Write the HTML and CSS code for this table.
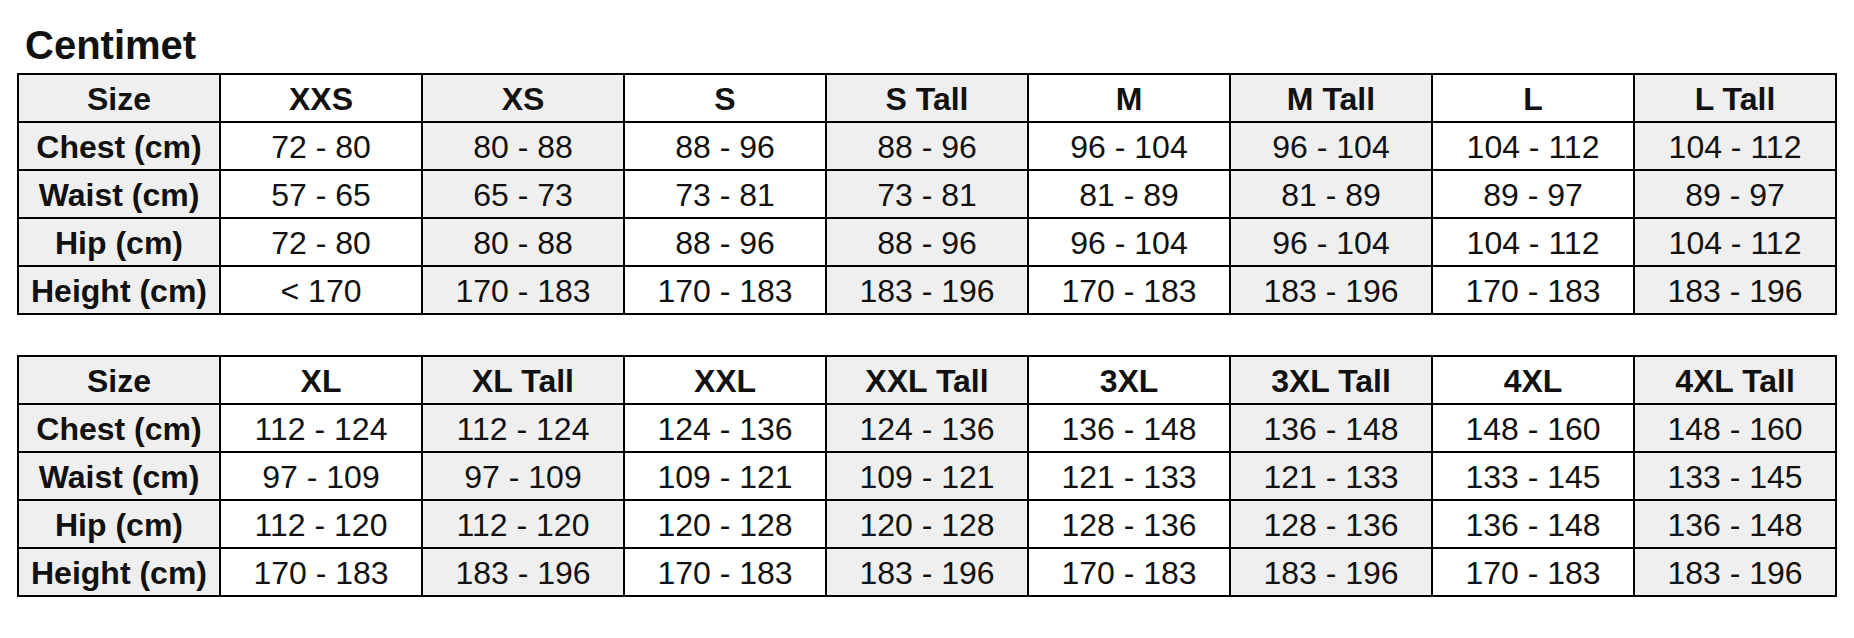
FILE: index.html
```html
<!DOCTYPE html>
<html lang="en">
<head>
<meta charset="utf-8">
<title>Size chart</title>
<link rel="stylesheet" href="styles.css">
</head>
<body>
<div class="page">
  <h1 class="title">Centimet</h1>
  <div class="chart">
    <div class="cell head shade">Size</div>
    <div class="cell head">XXS</div>
    <div class="cell head shade">XS</div>
    <div class="cell head">S</div>
    <div class="cell head shade">S Tall</div>
    <div class="cell head">M</div>
    <div class="cell head shade">M Tall</div>
    <div class="cell head">L</div>
    <div class="cell head shade">L Tall</div>

    <div class="cell head shade">Chest (cm)</div>
    <div class="cell">72 - 80</div>
    <div class="cell shade">80 - 88</div>
    <div class="cell">88 - 96</div>
    <div class="cell shade">88 - 96</div>
    <div class="cell">96 - 104</div>
    <div class="cell shade">96 - 104</div>
    <div class="cell">104 - 112</div>
    <div class="cell shade">104 - 112</div>

    <div class="cell head shade">Waist (cm)</div>
    <div class="cell">57 - 65</div>
    <div class="cell shade">65 - 73</div>
    <div class="cell">73 - 81</div>
    <div class="cell shade">73 - 81</div>
    <div class="cell">81 - 89</div>
    <div class="cell shade">81 - 89</div>
    <div class="cell">89 - 97</div>
    <div class="cell shade">89 - 97</div>

    <div class="cell head shade">Hip (cm)</div>
    <div class="cell">72 - 80</div>
    <div class="cell shade">80 - 88</div>
    <div class="cell">88 - 96</div>
    <div class="cell shade">88 - 96</div>
    <div class="cell">96 - 104</div>
    <div class="cell shade">96 - 104</div>
    <div class="cell">104 - 112</div>
    <div class="cell shade">104 - 112</div>

    <div class="cell head shade">Height (cm)</div>
    <div class="cell">&lt; 170</div>
    <div class="cell shade">170 - 183</div>
    <div class="cell">170 - 183</div>
    <div class="cell shade">183 - 196</div>
    <div class="cell">170 - 183</div>
    <div class="cell shade">183 - 196</div>
    <div class="cell">170 - 183</div>
    <div class="cell shade">183 - 196</div>
  </div>

  <div class="chart second">
    <div class="cell head shade">Size</div>
    <div class="cell head">XL</div>
    <div class="cell head shade">XL Tall</div>
    <div class="cell head">XXL</div>
    <div class="cell head shade">XXL Tall</div>
    <div class="cell head">3XL</div>
    <div class="cell head shade">3XL Tall</div>
    <div class="cell head">4XL</div>
    <div class="cell head shade">4XL Tall</div>

    <div class="cell head shade">Chest (cm)</div>
    <div class="cell">112 - 124</div>
    <div class="cell shade">112 - 124</div>
    <div class="cell">124 - 136</div>
    <div class="cell shade">124 - 136</div>
    <div class="cell">136 - 148</div>
    <div class="cell shade">136 - 148</div>
    <div class="cell">148 - 160</div>
    <div class="cell shade">148 - 160</div>

    <div class="cell head shade">Waist (cm)</div>
    <div class="cell">97 - 109</div>
    <div class="cell shade">97 - 109</div>
    <div class="cell">109 - 121</div>
    <div class="cell shade">109 - 121</div>
    <div class="cell">121 - 133</div>
    <div class="cell shade">121 - 133</div>
    <div class="cell">133 - 145</div>
    <div class="cell shade">133 - 145</div>

    <div class="cell head shade">Hip (cm)</div>
    <div class="cell">112 - 120</div>
    <div class="cell shade">112 - 120</div>
    <div class="cell">120 - 128</div>
    <div class="cell shade">120 - 128</div>
    <div class="cell">128 - 136</div>
    <div class="cell shade">128 - 136</div>
    <div class="cell">136 - 148</div>
    <div class="cell shade">136 - 148</div>

    <div class="cell head shade">Height (cm)</div>
    <div class="cell">170 - 183</div>
    <div class="cell shade">183 - 196</div>
    <div class="cell">170 - 183</div>
    <div class="cell shade">183 - 196</div>
    <div class="cell">170 - 183</div>
    <div class="cell shade">183 - 196</div>
    <div class="cell">170 - 183</div>
    <div class="cell shade">183 - 196</div>
  </div>
</div>
</body>
</html>
```

FILE: styles.css
```css
html, body {
  margin: 0;
  padding: 0;
  background: #ffffff;
}

.page {
  padding: 25px 0 0 17px;
  font-family: "Liberation Sans", Arial, sans-serif;
  color: #111111;
}

.title {
  margin: 0 0 8px 8px;
  font-size: 40px;
  line-height: 40px;
  font-weight: 700;
}

.chart {
  display: grid;
  grid-template-columns: repeat(9, 200px);
  grid-auto-rows: 46px;
  gap: 2px;
  padding: 2px;
  width: max-content;
  background: #000000;
}

.chart.second {
  margin-top: 40px;
}

.cell {
  display: flex;
  align-items: center;
  justify-content: center;
  padding-top: 2px;
  box-sizing: border-box;
  background: #ffffff;
  font-size: 32px;
  line-height: 1;
  white-space: nowrap;
}

.cell.shade {
  background: #efefef;
}

.cell.head {
  font-weight: 700;
}
```
